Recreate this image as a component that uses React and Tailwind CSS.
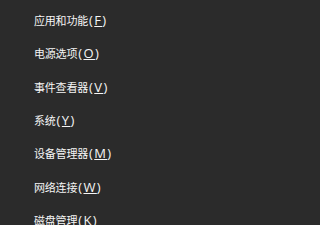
import React from "react";

const items = [
  ["应用和功能", "F"],
  ["电源选项", "O"],
  ["事件查看器", "V"],
  ["系统", "Y"],
  ["设备管理器", "M"],
  ["网络连接", "W"],
  ["磁盘管理", "K"],
];

export default function App() {
  return (
    <div
      className="w-full h-[225px] overflow-hidden bg-[#2b2b2b] pt-[4px] text-[#f5f5f5]"
      style={{ fontFamily: '"Noto Sans CJK SC", "Noto Sans", sans-serif' }}
    >
      {items.map(([label, key]) => (
        <div key={key} className="h-[33.33px] flex items-center pl-[34px] leading-none">
          <span className="text-[11px] tracking-[-0.2px]">{label}</span>
          <span className="text-[13px] tracking-[1.4px] ml-[1px]" style={{ fontFamily: '"Open Sans", "Noto Sans", sans-serif' }}>
            (<span className="underline underline-offset-[1px]">{key}</span>)
          </span>
        </div>
      ))}
    </div>
  );
}
